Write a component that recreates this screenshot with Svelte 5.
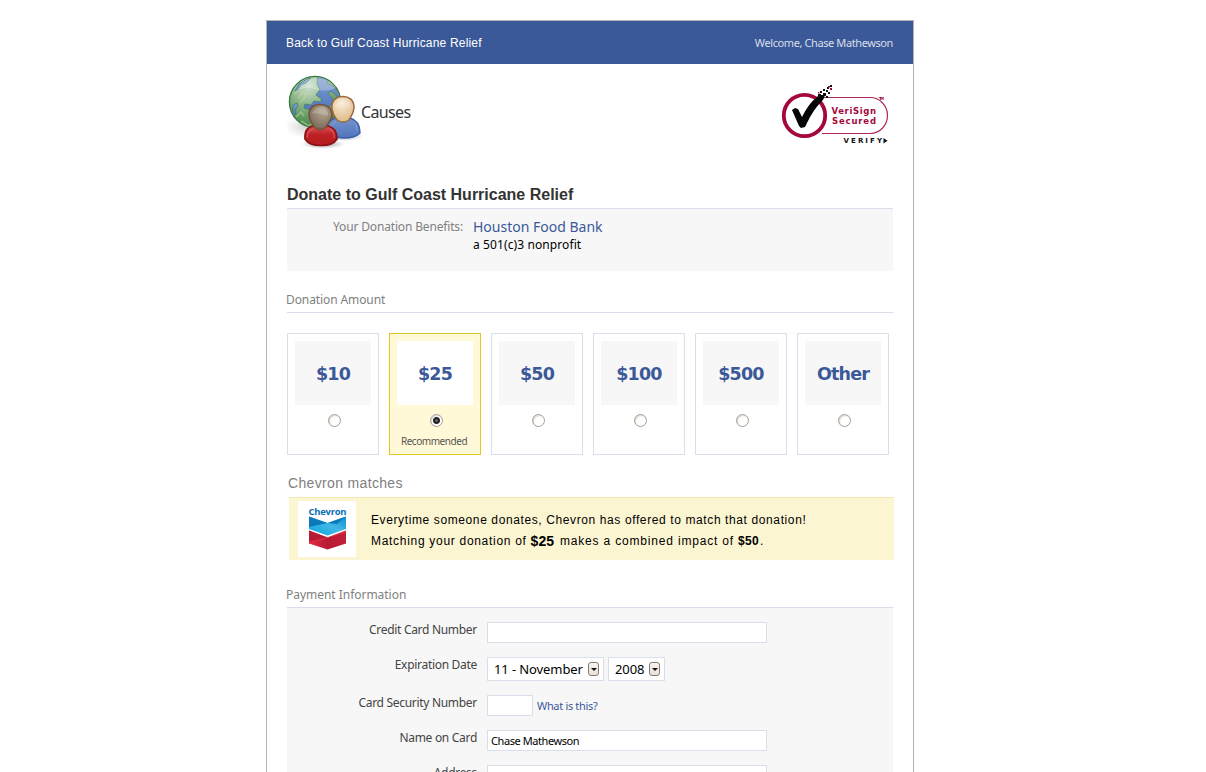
<script>
  const amounts = ['$10', '$25', '$50', '$100', '$500', 'Other'];
  let selected = $state('$25');
</script>

<div class="page">
  <header>
    <a class="back" href="#back">Back to Gulf Coast Hurricane Relief</a>
    <span class="welcome">Welcome, Chase Mathewson</span>
  </header>

  <div class="brand">
    <svg class="causes-icon" width="75" height="76" viewBox="0 0 75 76">
      <defs>
        <radialGradient id="globe" cx=".38" cy=".2" r=".8">
          <stop offset="0" stop-color="#c9dfcb" /><stop offset=".5" stop-color="#86b181" /><stop offset="1" stop-color="#3f8443" />
        </radialGradient>
        <linearGradient id="sea" x1="0" y1="0" x2="0" y2="1">
          <stop offset="0" stop-color="#7f9fce" /><stop offset="1" stop-color="#4c73c2" />
        </linearGradient>
        <radialGradient id="fair" cx=".45" cy=".3" r=".7">
          <stop offset="0" stop-color="#f8ead5" /><stop offset="1" stop-color="#dfba87" />
        </radialGradient>
        <radialGradient id="dark" cx=".6" cy=".3" r=".7">
          <stop offset="0" stop-color="#b3a58f" /><stop offset="1" stop-color="#796b58" />
        </radialGradient>
        <linearGradient id="red" x1="0" y1="0" x2="0" y2="1">
          <stop offset="0" stop-color="#d95454" /><stop offset=".45" stop-color="#bd2024" /><stop offset="1" stop-color="#b51e20" />
        </linearGradient>
        <linearGradient id="blue" x1="0" y1="0" x2="0" y2="1">
          <stop offset="0" stop-color="#7792cb" /><stop offset="1" stop-color="#4f74bd" />
        </linearGradient>
        <radialGradient id="shade">
          <stop offset="0" stop-color="#555" stop-opacity=".65" /><stop offset="1" stop-color="#777" stop-opacity="0" />
        </radialGradient>
        <clipPath id="disc"><circle cx="28" cy="28" r="25" /></clipPath>
      </defs>
      <ellipse cx="19" cy="53" rx="22" ry="11" fill="url(#shade)" opacity=".4" />
      <ellipse cx="57" cy="62" rx="19" ry="5" fill="url(#shade)" />
      <ellipse cx="36" cy="70" rx="22" ry="5" fill="url(#shade)" />
      <circle cx="28" cy="28" r="25.6" fill="url(#globe)" stroke="#347743" stroke-width="1.3" />
      <g clip-path="url(#disc)" fill="url(#sea)" stroke="#477f68" stroke-width=".8">
        <path d="M31 2 41 3 40 9 46 12 55 22 54 28 49 21 44 17 41 19 46 25 44 31 37 37 29 39 23 36 17 34 18 30 24 31 27 27 33 28 35 25 29 21 33 16 30 10Z" />
        <path d="M20 5 24 4 19 9 14 11 11 16 8 17 12 10Z" />
        <path d="M6 31 10 29 11 32 8 36 9 41 5 40Z" />
      </g>
      <path d="M7 21Q16 11 27 15T49 14Q43 4 28 4T7 21Z" fill="#fff" opacity=".27" />
      <path d="M13 29 19 22 16 19 24 20M14 47 22 52 26 48M9 43 14 38 17 42M12 24 15 17" fill="none" stroke="#c9dda7" stroke-width="1.6" opacity=".5" />
      <path d="M40 57Q39 45 51 44L63 44Q73 47 73 59Q68 64 57 64Q45 64 40 57Z" fill="url(#blue)" stroke="#3b5fab" stroke-width="1.5" />
      <path d="M49 48Q43 50 42 57M68 48Q70 51 70 57" fill="none" stroke="#91a9d8" stroke-width="1" opacity=".7" />
      <path d="M56 22.500C48 22.500 44 28 45 35C46 41 48 43 50 46Q56 50 62 46C64 42 67 39 67 33C67 26 62 22.500 56 22.500Z" fill="url(#fair)" stroke="#9a6a3e" stroke-width="1.5" />
      <path d="M18 65Q17 53 27 52L41 52Q50 54 50 65Q46 71.500 34 71.500Q22 71.500 18 65Z" fill="url(#red)" stroke="#8d1115" stroke-width="1.7" />
      <path d="M26 55Q20 57 20 64M43 55Q48 58 47 64" fill="none" stroke="#e77b79" stroke-width="1" opacity=".7" />
      <path d="M33 30.500C25 30.500 22 35 22 41C22 47 26 50 27 53Q33 58 39 53C40 50 45 46 45 40C44 33 40 30.500 33 30.500Z" fill="url(#dark)" stroke="#76513d" stroke-width="1.5" />
      <path d="M25 40Q27 33 35 33Q42 35 41 42Q33 38 25 40M48 34Q50 25 57 25Q64 27 64 34Q56 30 48 34" fill="#fff" opacity=".2" />
    </svg>
    <span class="causes">Causes</span>
    <svg class="verisign" width="110" height="64" viewBox="0 0 110 64">
      <path d="M45 14.500H90a17.500 18 0 0 1 0 36H42" fill="#fff" stroke="#b0275c" stroke-width="1.2" />
      <circle cx="24.500" cy="32.500" r="20.700" fill="#fff" stroke="#a4073c" stroke-width="3.800" />
      <path d="M12 27 15 25 18 26 22 34Q29 20 36 15L39 12H43L45 14 42 18Q33 27 27 40L25 44 21 45 19 43Z" fill="#050505" />
      <g fill="#111">
        <rect x="38" y="11" width="3" height="3" /><rect x="43" y="10" width="3" height="3" /><rect x="40" y="8" width="2" height="2" />
        <rect x="46" y="7" width="2" height="2" /><rect x="46" y="13" width="2" height="2" /><rect x="48" y="9" width="2" height="2" />
        <rect x="43" y="6" width="2" height="2" /><rect x="50" y="2" width="2" height="2" /><rect x="47" y="4" width="2" height="2" />
      </g>
      <g fill="#a4073c"><rect x="48" y="3" width="2" height="1.500" /><rect x="50" y="5" width="2" height="2" /><rect x="38" y="9" width="1.500" height="1.500" /></g>
      <g fill="#a4073c" font-family="DejaVu Sans, sans-serif" font-weight="700" font-size="8.500">
        <text x="51.500" y="30.500" textLength="44.500" lengthAdjust="spacing">VeriSign</text>
        <text x="52" y="40.500" textLength="44" lengthAdjust="spacing">Secured</text>
        <text x="99" y="17" font-size="4" textLength="5">TM</text>
      </g>
      <text x="63.500" y="60" fill="#111" font-family="DejaVu Sans, sans-serif" font-weight="700" font-size="7" textLength="38.500">VERIFY</text>
      <path d="M103.500 55v5.500l4-2.700z" fill="#111" />
    </svg>
  </div>

  <h1>Donate to Gulf Coast Hurricane Relief</h1>
  <section class="benefits">
    <span class="benefit-label">Your Donation Benefits:</span>
    <div class="charity">
      <a href="#charity">Houston Food Bank</a>
      <span class="status">a 501(c)3 nonprofit</span>
    </div>
  </section>

  <h2 class="amount-title"><span>Donation Amount</span></h2>
  <div class="amounts">
    {#each amounts as amount}
      <label class="amount" class:selected={selected === amount}>
        <span class="value">{amount}</span>
        <input type="radio" name="amount" value={amount} bind:group={selected} />
        {#if amount === '$25'}<span class="recommended">Recommended</span>{/if}
      </label>
    {/each}
  </div>

  <h2 class="match-title"><span>Chevron matches</span></h2>
  <section class="match">
    <svg class="chevron" width="58" height="56" viewBox="0 0 58 56">
      <defs>
        <linearGradient id="cb" x1="0" x2="1" y1="1" y2="0"><stop stop-color="#08a5dc" /><stop offset=".55" stop-color="#42b8e7" /><stop offset="1" stop-color="#0c8fce" /></linearGradient>
        <linearGradient id="cr" x1="0" x2="1"><stop stop-color="#e02c43" /><stop offset=".5" stop-color="#b91b35" /><stop offset="1" stop-color="#c01f38" /></linearGradient>
      </defs>
      <rect width="58" height="56" fill="#fff" />
      <text x="10.500" y="13.500" textLength="38" fill="#0870b5" font-family="Open Sans, sans-serif" font-weight="700" font-size="9.500">Chevron</text>
      <path d="M11 15.500 29.500 22 48 15.500V28L29.500 34.500 11 28Z" fill="url(#cb)" />
      <path d="M11 15.500 29.500 22 11 26ZM48 15.500 29.500 22 39 23Z" fill="#0d79b9" />
      <path d="M11 29.500 29.500 36.500 48 29.500V42.500L29.500 48.500 11 42.500Z" fill="url(#cr)" />
      <path d="M11 29.500 29.500 36.500 11 41Z" fill="#b81b36" />
      <path d="M29.500 36.500 48 29.500V31.500L11 42.500V40.500Z" fill="#e12d45" />
    </svg>
    <div class="match-text">
      <p><span class="line-one">Everytime someone donates, Chevron has offered to match that donation!</span></p>
      <p><span class="line-a">Matching your donation of</span><b class="gift">$25</b><span class="line-b">makes a combined impact of</span><b class="impact">$50</b>.</p>
    </div>
  </section>

  <h2 class="payment-title"><span>Payment Information</span></h2>
  <form>
    <div class="row"><label for="number">Credit Card Number</label><input id="number" class="wide" /></div>
    <div class="row date">
      <label for="month">Expiration Date</label>
      <button type="button" id="month" class="select month"><span>11 - November</span><i></i></button>
      <button type="button" class="select year"><span>2008</span><i></i></button>
    </div>
    <div class="row"><label for="code">Card Security Number</label><input id="code" class="code" /><a class="help" href="#code">What is this?</a></div>
    <div class="row"><label for="name">Name on Card</label><input id="name" class="wide" value="Chase Mathewson" /></div>
    <div class="row"><label for="address">Address</label><input id="address" class="wide" /></div>
  </form>
</div>

<style>
  :global(body) { background: #fff; overflow: hidden; }
  * { box-sizing: border-box; }
  a { text-decoration: none; }
  .page {
    width: 648px; height: 752px; margin: 20px 0 0 266px; overflow: hidden;
    border: 1px solid #b2b5b4; border-bottom: 0; background: #fff;
    font: 12px/16px "Noto Sans", sans-serif; color: #333; white-space: nowrap;
  }
  header { height: 43px; padding: 0 20px 0 19px; background: #3b5998; display: flex; align-items: center; justify-content: space-between; }
  .back { color: #fff; font: 12px/16px "Liberation Sans", sans-serif; letter-spacing: .18px; }
  .welcome { color: #d8dfea; font-size: 11px; padding-top: 1px; letter-spacing: -.4px; }
  .brand { height: 118px; padding: 10px 23px 0 20px; display: flex; align-items: flex-start; }
  .causes { font-size: 16px; line-height: 20px; margin-top: 28px; margin-left: -1px; letter-spacing: -.65px; }
  .verisign { margin: 9px 0 0 auto; }
  h1, h2, p { margin: 0; font-weight: 400; }
  h1 { height: 27px; margin: 0 20px; border-bottom: 1px solid #d8dfea; font: bold 16px/26px "Liberation Sans", sans-serif; color: #333; }
  .benefits { height: 62px; margin: 0 20px; background: #f7f7f7; display: flex; padding-top: 9px; }
  .benefit-label { width: 176px; text-align: right; color: #808080; line-height: 18px; letter-spacing: -.16px; }
  .charity { margin-left: 10px; display: flex; flex-direction: column; align-items: flex-start; }
  .charity a { color: #3b5998; font-size: 14px; line-height: 18px; }
  .status { color: #000; line-height: 17px; letter-spacing: .1px; }
  h2 { margin: 0 20px; border-bottom: 1px solid #d8dfea; color: #808080; font-size: 12px; }
  .amount-title { height: 42px; padding-top: 20px; line-height: 18px; letter-spacing: -.1px; }
  h2 > span { margin-left: -1px; }
  .amounts { display: flex; gap: 10px; margin: 20px 20px 0; }
  .amount { width: 92px; height: 122px; padding-top: 7px; border: 1px solid #d8dfea; display: flex; flex-direction: column; align-items: center; }
  .amount.selected { background: #fff9d7; border-color: #e2c822; }
  .value { width: 76px; height: 64px; background: #f7f7f7; text-align: center; font: bold 17.500px/66px "DejaVu Sans", sans-serif; letter-spacing: -.8px; color: #3b5998; }
  .selected .value { background: #fff; }
  input[type="radio"] { appearance: none; width: 13px; height: 13px; margin: 9px 0 0 2px; border: 1px solid #a99d95; border-radius: 50%; background: #fff; box-shadow: inset 1px 1px 1px #ddd6d0; }
  input[type="radio"]:checked { background: radial-gradient(circle at 5.500px 5.500px, #888 0, #222 2px, #222 3px, #fff 4px); }
  .recommended { font-size: 10px; line-height: 14px; margin: 7px 2px 0 0; color: #555; letter-spacing: -.45px; }
  .match-title { height: 43px; margin-right: 19px; margin-left: 22px; padding-top: 19px; border-color: #f5e8b0; font: 14px/18px "Liberation Sans", sans-serif; letter-spacing: .34px; }
  .match { height: 62px; margin: 0 19px 0 22px; padding: 3px 0 0 9px; display: flex; background: #fcf5d2; }
  .match-text { margin-left: 15px; padding-top: 9px; color: #000; font: 12px/21px "Liberation Sans", sans-serif; }
  .match-text p { height: 21px; display: flex; }
  .line-one { letter-spacing: .61px; }
  .line-a { letter-spacing: .7px; }
  .line-b { letter-spacing: .82px; }
  .gift { font-size: 14px; margin: 0 6px 0 4px; }
  .impact { font-size: 12px; margin: 0 1px 0 4px; letter-spacing: .3px; }
  .payment-title { height: 48px; padding-top: 26px; line-height: 18px; letter-spacing: -.03px; }
  form { height: 220px; margin: 0 20px; padding-top: 14px; background: #f7f7f7; }
  .row { display: flex; height: 35px; align-items: flex-start; }
  .row.date { height: 38px; }
  .row label { width: 190px; margin-right: 10px; text-align: right; line-height: 16px; color: #444; letter-spacing: -.3px; }
  .row input { height: 21px; margin: 0; padding: 0 3px; border: 1px solid #d8dfea; border-radius: 0; background: #fff; font: 11px "Noto Sans", sans-serif; letter-spacing: -.42px; color: #000; }
  .row .wide { width: 280px; }
  .row .code { width: 46px; }
  .help { margin: 3px 0 0 4px; font-size: 11px; letter-spacing: -.33px; color: #3b5998; }
  .select { height: 24px; margin: 0 4px 0 0; padding: 0 4px 0 6px; border: 1px solid #d8dfea; background: #fff; font: 13px "Noto Sans", sans-serif; letter-spacing: -.1px; color: #000; display: flex; align-items: center; justify-content: space-between; }
  .month { width: 117px; }
  .year { width: 57px; }
  .select i { width: 11px; height: 14px; border: 1px solid #867a70; border-radius: 3px; background: linear-gradient(#f8f5f1, #e8e0d9); display: flex; align-items: center; justify-content: center; }
  .select i::after { content: ""; border: 3px solid transparent; border-top-color: #111; border-bottom: 0; }
</style>
